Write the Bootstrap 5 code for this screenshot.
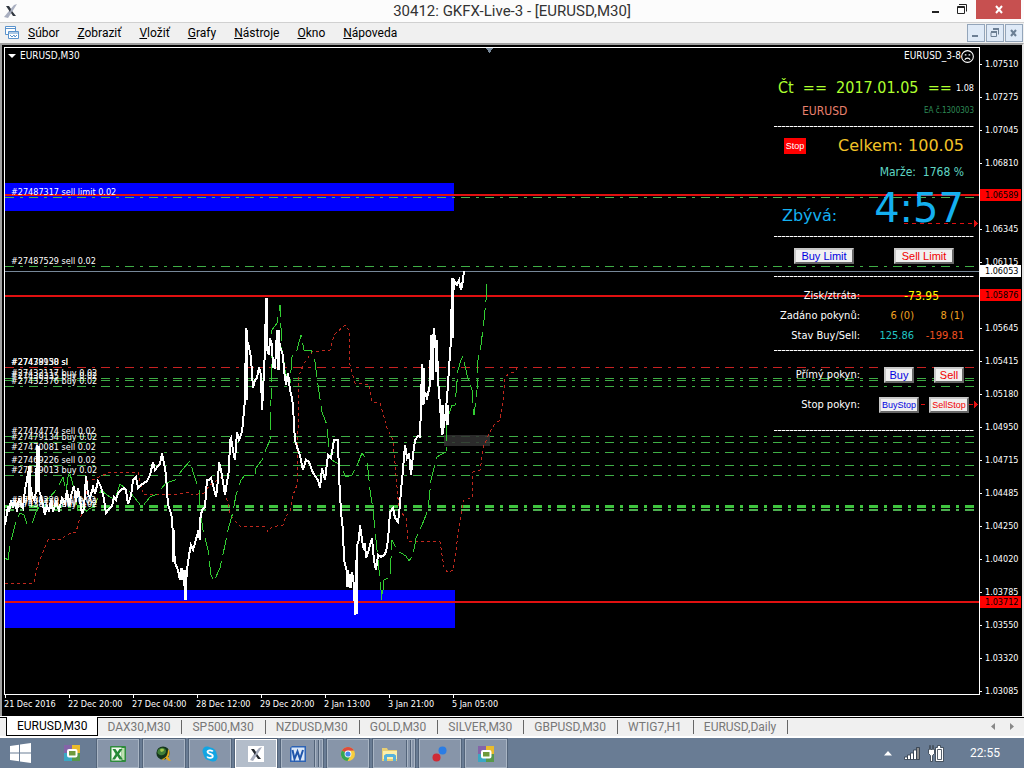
<!DOCTYPE html>
<html lang="sk">
<head>
<meta charset="utf-8">
<meta name="viewport" content="width=device-width, initial-scale=1">
<title>30412: GKFX-Live-3 - [EURUSD,M30]</title>
<link href="https://cdn.jsdelivr.net/npm/bootstrap@5.3.0/dist/css/bootstrap.min.css" rel="stylesheet">
<style>
  :root { --ui: Roboto, "Open Sans", "Noto Sans", sans-serif; --chart: "DejaVu Sans Condensed", "DejaVu Sans", sans-serif; }
  body { font-family: var(--ui); font-size: 12px; color: #000; background: #000; }
  button { font: inherit; }
  .title-bar { height: 23px; background: #fcfcfc; border-bottom: 1px solid #d0d0d0; }
  .title-bar h1 { font-size: 15px; line-height: 23px; color: #333; padding-left: 84px; }
  .win-btn { height: 19px; width: 27px; }
  .win-close { width: 45px; background: #c75050; margin-right: 3px; }
  .menu-bar { height: 20px; background: #f0f0f0; }
  .menu-bar ul { gap: 18px; }
  .menu-bar a { color: #000; line-height: 20px; }
  .child-set { gap: 1px; padding-right: 1px; }
  .child-btn { width: 18px; height: 18px; background: #dfeaf7; border: 1px solid #93a5ba; }
  .frame { background: #000; border-top: 2px solid #a0a0a0; border-left: 2px solid #a0a0a0; border-right: 2px solid #e8e8e8; padding: 2px 0 0 2px; font-family: var(--chart); font-size: 9px; color: #fff; }
  .plot { border: 1px solid #fff; }
  .order-text { font-size: 9px; fill: #fff; }
  .caption-text { font-size: 10px; line-height: 14px; padding: 1px 5px 0 3px; }
  .price-axis { width: 42px; padding-top: 1px; }
  .price-axis li { height: 33px; line-height: 33px; }
  .price-axis li::before { content: ""; display: inline-block; width: 2px; height: 1px; background: #fff; margin-right: 3px; vertical-align: middle; }
  .price-flag { left: 0; width: 41px; height: 12px; line-height: 12px; padding-left: 5px; background: #f00; color: #000; }
  .price-now { background: #fff; }
  .time-axis { height: 21px; }
  .time-axis li { width: 64px; line-height: 12px; }
  .time-axis li::before { content: ""; display: block; width: 1px; height: 3px; background: #fff; margin-left: 1px; }
  .panel { top: 27px; right: 5px; width: 200px; font-size: 12px; line-height: 22px; }
  .panel span { white-space: pre; }
  .rule { height: 10px; }
  .rule::before { content: ""; display: block; flex: 1; height: 1px; background: repeating-linear-gradient(90deg, #fff 0 3px, #777 3px 4px); }
  .h20 { height: 20px; } .h26 { height: 26px; } .h30 { height: 30px; } .h50 { height: 50px; }
  .pe-10 { padding-right: 10px; } .ps-10 { padding-left: 10px; }
  .big { font-size: 16px; }
  .wide { font-family: "DejaVu Sans", sans-serif; }
  .clock { font-size: 40px; line-height: 54px; }
  .tiny { font-size: 8px; }
  .spot { font-size: 9px; }
  .pair { font-size: 12px; padding-left: 28px; }
  .lime { color: #adff2f; } .salmon { color: #e9806e; } .sea { color: #2e8b57; } .gold { color: #f2c328; } .aqua { color: #5fd6c4; }
  .sky { color: #14b0f0; } .yellow { color: #ff0; } .orange { color: #f0a020; } .teal { color: #20c4c4; } .loss { color: #f05020; }
  .limit-row { padding: 0 20px; }
  .market-rows { padding: 5px 0; }
  .market-rows > div > div { padding-left: 14px; }
  .cap-col { width: 86px; text-align: right; font-size: 11px; }
  .profit-col { width: 79px; text-align: right; }
  .num-col { width: 54px; text-align: right; font-size: 11px; }
  .num-col2 { width: 50px; text-align: right; font-size: 11px; }
  .order-btn { width: 60px; height: 16px; border: 2px solid; border-color: #c8c8c8 #686868 #686868 #c8c8c8; background: #f0f0f0; font-family: "Liberation Sans", sans-serif; font-size: 11px; line-height: 12px; padding: 0; border-radius: 0; text-align: center; color: #0000e0; }
  .order-btn.sell { color: #f00000; }
  .order-btn.w30 { width: 30px; } .order-btn.w40 { width: 40px; font-size: 9px; }
  .stop-btn { width: 22px; height: 16px; background: #f00; color: #fff; border: 0; padding: 0; font-family: "Liberation Sans", sans-serif; font-size: 9px; line-height: 16px; }
  .tab-strip { height: 22px; background: #f0f0f0; border-bottom: 2px solid #fff; box-shadow: inset 0 1px #fff, inset 0 2px #000; padding: 1px 0 0 6px; }
  .tab-strip a { color: #777; line-height: 14px; padding: 0 11px 0 10px; border-right: 1px solid #666; }
  .tab-strip a.current { color: #000; background: #fff; border: 1px solid #000; border-top: 0; line-height: 18px; padding: 0 9px 0 10px; }
  .task-bar { height: 30px; background: #697c94; }
  .start-btn { margin: 0 33px 0 10px; }
  .pinned-btn { margin-right: 17px; }
  .task-set { gap: 4px; }
  .task { width: 42px; height: 29px; background: #8795a9; border: 1px solid #a9b5c4; outline: 1px solid #53647a; padding: 0; }
  .task.current { background: #b3bdca; border-color: #fff; }
  .strip { width: 4px; border-left: 1px solid #53647a; box-shadow: inset 1px 0 #a9b5c4; }
  .tray { padding-right: 24px; }
  .tray .signal { margin: 0 8px 0 12px; }
  .tray time { color: #fff; font-size: 12px; margin-left: 26px; }
</style>
</head>
<body>
<div class="d-flex flex-column vh-100 overflow-hidden">

  <header class="title-bar d-flex align-items-start flex-shrink-0">
    <svg class="ms-1 mt-1" width="14" height="14" viewBox="0 0 14 14" aria-hidden="true"><path d="M10 1 13 0 8 8 4 14 0 13 5 7z" fill="#a9afc0"/><path d="M2 2h3l2 3-1 3zM8 7l4 5H9L7 9z" fill="#30363f"/></svg>
    <h1 class="flex-fill text-center m-0 fw-normal text-nowrap">30412: GKFX-Live-3 - [EURUSD,M30]</h1>
    <button class="win-btn border-0 p-0 bg-transparent d-flex" aria-label="Minimalizovať"><svg width="27" height="19"><path d="M10 12h7" stroke="#222" stroke-width="2"/></svg></button>
    <button class="win-btn border-0 p-0 bg-transparent d-flex" aria-label="Obnoviť"><svg width="27" height="19"><path d="M8.500 6.500h7v7h-7zM8 7.500h8M10 4.500h7.500v7" fill="none" stroke="#222"/></svg></button>
    <button class="win-btn win-close border-0 p-0 d-flex justify-content-center" aria-label="Zavrieť"><svg width="12" height="19"><path d="M3 6l6 7M9 6l-6 7" stroke="#fff" stroke-width="2"/></svg></button>
  </header>

  <nav class="menu-bar d-flex align-items-center flex-shrink-0">
    <svg class="ms-1" width="16" height="16" viewBox="0 0 16 16" fill="none" stroke="#5b93cc" aria-hidden="true"><path d="M1.500 1.500h10v8h-10zM1 3.500h11" fill="#fff"/><path d="M4.500 6.500h10v7h-10zM4 8h11" fill="#fff"/><path d="M6 10l2 2 2-2 1 2 2-2"/></svg>
    <ul class="list-unstyled d-flex m-0 ms-2">
      <li><a class="text-decoration-none" href="#"><u>S</u>úbor</a></li>
      <li><a class="text-decoration-none" href="#"><u>Z</u>obraziť</a></li>
      <li><a class="text-decoration-none" href="#"><u>V</u>ložiť</a></li>
      <li><a class="text-decoration-none" href="#"><u>G</u>rafy</a></li>
      <li><a class="text-decoration-none" href="#"><u>N</u>ástroje</a></li>
      <li><a class="text-decoration-none" href="#"><u>O</u>kno</a></li>
      <li><a class="text-decoration-none" href="#"><u>N</u>ápoveda</a></li>
    </ul>
    <div class="child-set ms-auto d-flex">
      <button class="child-btn p-0 d-flex" aria-label="Minimalizovať graf"><svg width="16" height="16"><path d="M4 11h6" stroke="#6c7f94" stroke-width="2"/></svg></button>
      <button class="child-btn p-0 d-flex" aria-label="Obnoviť graf"><svg width="16" height="16" fill="none" stroke="#6c7f94"><path d="M4 7.500h5.500v4h-5.500zM6 4.500h5.500v5"/><path d="M4 7h6M6 4h6" stroke-width="2"/></svg></button>
      <button class="child-btn p-0 d-flex" aria-label="Zavrieť graf"><svg width="16" height="16"><path d="M5 5l5 6M10 5l-5 6" stroke="#6c7f94" stroke-width="2"/></svg></button>
    </div>
  </nav>

  <main class="frame d-flex flex-column flex-fill overflow-hidden">
    <div class="d-flex flex-fill overflow-hidden">
      <section class="plot position-relative flex-fill overflow-hidden">
        <svg class="position-absolute top-0 start-0 w-100 h-100" role="img" aria-label="EURUSD M30">
          <g transform="translate(-5 -48)" fill="none" shape-rendering="crispEdges">
            <path d="M485 47h9l-4.500 6z" fill="#778899"/>
            <path d="M5 183h449v28H5zM5 590h450v38H5z" fill="#00f"/>
            <g id="levels"></g>
            <path d="M444 435h46v11h-46z" fill="#333" fill-opacity=".85"/>
            <polyline stroke="#c0281e" stroke-dasharray="3 3" points="5,584 34,583 37,568 42,554 48,540 62,539 66,535 76,532 80,518 85,508 88,480 95,479 110,472 138,472 143,494 170,495 190,492 192,495 204,493 210,485 222,477 225,490 230,514 236,522 240,526 265,527 268,532 272,527 283,525 286,516 290,512 293,495 297,485 298,430 299,375 305,362 312,352 330,350 334,335 345,325 349,330 350,365 355,383 369,385 372,402 380,403 387,428 393,440 396,475 399,510 406,518 408,541 440,542 444,567 448,573 453,570 456,550 460,520 464,500 472,498 473,472 480,470 484,445 490,432 494,425 500,420 503,400 505,378 509,373 515,372 517,368"/>
            <polyline stroke="#32cd32" stroke-dasharray="18 6" points="5,558 8,560 10,545 15,525 20,513 24,515 27,524 32,524 36,512 40,505 50,497 57,489 63,477 66,492 69,470 73,485 78,510 85,512 95,505 101,490 107,495 115,500 120,484 130,492 142,507 150,497 157,494 166,483 175,480 182,470 190,461 194,475 199,490 200,510 203,530 208,550 211,575 214,581 220,568 225,545 228,530 233,512 236,495 241,480 245,475 255,476 256,468 262,460 266,449 270,440 271,400 272,330 277,323 280,305 282,350 287,380 290,383 292,357 297,350 301,335 304,350 311,350 315,362 318,385 322,412 327,425 329,450 332,460 340,465 346,477 352,475 358,463 362,453 367,460 370,490 373,510 376,540 378,560 381,590 382,600 384,580 390,577 392,540 397,550 401,553 406,556 409,561 413,555 416,538 422,525 428,510 431,480 437,457 440,455 446,452 447,420 452,405 455,405 458,370 461,360 463,356 467,375 472,390 474,415 477,390 478,360 481,345 484,320 486,300 487,283 489,283"/>
            <polyline stroke="#fff" stroke-width="2" points="5,525 7,513 8,506 9,512 11,500 13,508 15,500 17,512 19,498 21,505 23,508 25,490 27,480 28,472 29,470 30,484 32,495 34,500 36,492 37,445 38,470 39,490 41,497 43,505 45,515 47,505 49,512 51,500 53,512 56,502 59,510 62,498 65,504 67,490 69,506 71,496 74,486 76,502 78,488 80,500 82,514 84,508 86,476 88,494 90,498 93,487 95,494 98,481 101,487 104,499 106,513 109,509 112,506 114,497 116,500 118,493 121,490 124,488 126,490 128,504 131,496 133,480 136,477 138,488 141,485 144,483 147,481 150,475 153,462 155,470 158,466 160,464 162,453 164,463 166,475 167,490 168,505 170,510 172,518 173,538 174,548 175,563 178,570 180,580 182,570 184,572 185,600 187,570 189,555 191,545 193,550 195,543 198,532 200,540 200,520 202,510 205,507 207,480 209,480 211,478 213,485 216,497 218,480 219,462 221,470 223,482 225,495 227,482 229,470 230,440 231,438 233,450 235,460 237,432 239,440 242,432 245,400 246,328 247,340 249,347 251,358 253,388 255,380 257,378 259,367 261,375 262,410 263,392 265,350 266,298 267,350 269,355 270,338 272,345 273,367 275,368 276,350 277,330 279,340 281,350 283,355 284,370 286,385 288,373 290,390 292,398 293,405 294,425 295,440 297,447 300,455 303,470 306,460 309,462 313,473 318,480 320,488 322,468 325,480 328,455 331,458 334,440 338,440 339,475 341,512 343,530 344,560 347,572 348,587 350,580 352,572 354,585 355,615 356,580 357,545 359,540 360,525 362,540 364,550 365,543 366,558 368,553 370,545 372,538 374,560 376,570 378,555 381,557 384,555 386,552 388,540 390,512 393,508 395,518 398,522 400,505 401,490 403,470 405,445 407,458 409,453 411,475 413,455 415,440 418,436 420,437 421,405 422,364 423,405 425,392 427,398 430,385 431,335 433,340 434,328 436,355 437,340 438,380 440,405 442,435 444,425 446,410 448,385 449,368 451,340 452,278 453,293 455,282 457,285 459,280 461,290 463,280 464,271"/>
            <path d="M185 570v30M173 530v32M181 568v12M347 570v17M350 574v14M356 560v54M246 330v70M266 298v48M278 330v40M432 335v45M436 340v32M442 405v29M447 405v20M423 368v36M29 466v34M38 446v46M452 278v60" stroke="#fff" stroke-width="3"/>
            <path d="M904 223.500h70M921 404.500h53" stroke="#e01010" stroke-dasharray="4 4"/>
            <path d="M974 220l4 3.500-4 4zM974 401l4 3.500-4 4z" fill="#e01010"/>
          </g>
          <g id="orders" transform="translate(-5 -48)"></g>
        </svg>

        <div class="caption-text position-relative d-flex justify-content-between">
          <span class="d-flex align-items-center gap-1 lh-1"><svg width="8" height="5"><path d="M0 0h8L4 4z" fill="#fff"/></svg>EURUSD,M30</span>
          <span class="d-flex align-items-center">EURUSD_3-8<svg width="13" height="13" viewBox="0 0 12 12" fill="none" stroke="#fff"><circle cx="6" cy="6" r="5.400"/><path d="M3.500 9c1-2 4-2 5 0M3.500 4.500h1.500M7 4.500h1.500"/></svg></span>
        </div>

        <div class="panel position-absolute">
          <div class="h26 d-flex align-items-center justify-content-between ps-1"><span class="big lime">Čt  ==  2017.01.05  ==</span><span class="spot">1.08</span></div>
          <div class="h20 d-flex align-items-center justify-content-between"><span class="pair salmon">EURUSD</span><span class="tiny sea">EA č.1300303</span></div>
          <div class="rule d-flex align-items-center"></div>
          <div class="h30 d-flex align-items-center justify-content-between pe-10 ps-10"><button class="stop-btn">Stop</button><span class="big wide gold">Celkem: 100.05</span></div>
          <div class="h20 text-end pe-10 aqua"><span>Marže:  1768 %</span></div>
          <div class="h50 d-flex justify-content-between pe-10 ps-2 sky"><span class="big wide pt-4">Zbývá:</span><span class="clock wide">4:57</span></div>
          <div class="rule d-flex align-items-center"></div>
          <div class="limit-row h30 d-flex align-items-center justify-content-between"><button class="order-btn">Buy Limit</button><button class="order-btn sell">Sell Limit</button></div>
          <div class="rule d-flex align-items-center mb-1"></div>
          <div class="d-flex h20"><span class="cap-col">Zisk/ztráta:</span><span class="profit-col yellow">-73.95</span></div>
          <div class="d-flex h20"><span class="cap-col">Zadáno pokynů:</span><span class="num-col orange">6 (0)</span><span class="num-col2 orange">8 (1)</span></div>
          <div class="d-flex h20"><span class="cap-col">Stav Buy/Sell:</span><span class="num-col teal">125.86</span><span class="num-col2 loss">-199.81</span></div>
          <div class="rule d-flex align-items-center"></div>
          <div class="market-rows">
            <div class="d-flex h30 align-items-center"><span class="cap-col">Přímý pokyn:</span><div class="d-flex flex-fill justify-content-around"><button class="order-btn w30">Buy</button><button class="order-btn sell w30">Sell</button></div></div>
            <div class="d-flex h30 align-items-center"><span class="cap-col">Stop pokyn:</span><div class="d-flex flex-fill justify-content-around"><button class="order-btn w40">BuyStop</button><button class="order-btn sell w40">SellStop</button></div></div>
          </div>
          <div class="rule d-flex align-items-center"></div>
        </div>
      </section>

      <aside class="price-axis position-relative flex-shrink-0">
        <ul class="list-unstyled m-0" id="prices"></ul>
        <span class="price-flag position-absolute" style="top:142px">1.06589</span>
        <span class="price-flag position-absolute" style="top:242px">1.05876</span>
        <span class="price-flag price-now position-absolute" style="top:218px">1.06053</span>
        <span class="price-flag position-absolute" style="top:549px">1.03712</span>
      </aside>
    </div>
    <ol class="time-axis list-unstyled d-flex m-0 flex-shrink-0 text-nowrap">
      <li>21 Dec 2016</li><li>22 Dec 20:00</li><li>27 Dec 04:00</li><li>28 Dec 12:00</li><li>29 Dec 20:00</li><li>2 Jan 13:00</li><li>3 Jan 21:00</li><li>5 Jan 05:00</li>
    </ol>
  </main>

  <nav class="tab-strip d-flex align-items-center flex-shrink-0 text-nowrap">
    <a class="current text-decoration-none" href="#">EURUSD,M30</a>
    <a class="text-decoration-none" href="#">DAX30,M30</a>
    <a class="text-decoration-none" href="#">SP500,M30</a>
    <a class="text-decoration-none" href="#">NZDUSD,M30</a>
    <a class="text-decoration-none" href="#">GOLD,M30</a>
    <a class="text-decoration-none" href="#">SILVER,M30</a>
    <a class="text-decoration-none" href="#">GBPUSD,M30</a>
    <a class="text-decoration-none" href="#">WTIG7,H1</a>
    <a class="text-decoration-none" href="#">EURUSD,Daily</a>
    <svg class="ms-auto me-2" width="26" height="8" fill="#888"><path d="M5 0v7L1 3.500zM20 0v7l4-3.500z"/></svg>
  </nav>

  <footer class="task-bar d-flex align-items-center flex-shrink-0">
    <button class="start-btn border-0 bg-transparent p-0 d-flex" aria-label="Štart"><svg width="21" height="20" fill="#fff"><path d="M0 3l9-1.300V9.500H0zM10 1.500L21 0v9.500H10zM0 10.500h9v7.800L0 17zM10 10.500h11V20l-11-1.500z"/></svg></button>
    <button class="pinned-btn border-0 bg-transparent p-0 d-flex" aria-label="Správca"><svg width="16" height="16"><use href="#ico-squares"/></svg></button>
    <div class="task-set d-flex">
      <button class="task" aria-label="Excel"><svg width="16" height="16" viewBox="0 0 16 16"><rect width="16" height="16" rx="1" fill="#2e8b3c"/><path d="M1.500 1.500h10v13h-10z" fill="#f2f9ee"/><path d="M11.500 2v12h3V2z" fill="#bfe0b0"/><path d="M2.500 3h3l2 3 2-3h3L9 8l4 5.500H9.500L7.300 10 5 13.500H2L5.600 8z" fill="#278a38"/></svg></button>
      <button class="task" aria-label="Terminál"><svg width="16" height="16" viewBox="0 0 16 16"><circle cx="7" cy="7" r="6.600" fill="#14351b"/><path d="M2 4c3-4 8-2 8 1s-3 5-6 4S1 6 2 4z" fill="#3f7d37"/><path d="M4 4c1-2 4-1 4 0S6 6 5 6z" fill="#a3c74d"/><path d="M12 3c2 2 2 6 0 8l3 4-3-.5L9.500 12 7 14.500 6 13c4-1 6-4 6-10z" fill="#e3a81b"/></svg></button>
      <button class="task" aria-label="Skype"><svg width="16" height="16" viewBox="0 0 16 16"><circle cx="8" cy="8" r="6.500" fill="#12a5e3"/><circle cx="5" cy="5" r="4.500" fill="#12a5e3"/><circle cx="11" cy="11" r="4.500" fill="#12a5e3"/><path d="M10.800 5.500C10 3.800 5.500 3.800 5.500 6s5.300 1.500 5.300 4-4.800 2.500-5.600.5" fill="none" stroke="#fff" stroke-width="1.800"/></svg></button>
      <button class="task current" aria-label="MetaTrader"><svg width="16" height="16" viewBox="0 0 16 16"><path d="M0 0h16v16H0z" fill="#fff"/><path d="M11 2l3-1-5 8-4 6-3-1 4-6z" fill="#a9afc0"/><path d="M3 3h3l2 3-1 3zM9 8l4 5h-3L8 10z" fill="#23282f"/></svg></button>
      <button class="task d-flex" aria-label="Word"><span class="flex-fill align-self-center"><svg width="16" height="16" viewBox="0 0 16 16"><path d="M0 2l2-2h14v16H0z" fill="#2c62b4"/><path d="M1.500 1.500h13v13h-13z" fill="#dbe8f8"/><path d="M2.500 4l2 9 3-7.500 2.500 7.500L13 4" fill="none" stroke="#1f55ab" stroke-width="2"/></svg></span><span class="strip h-100"></span><span class="strip h-100"></span></button>
      <button class="task" aria-label="Chrome"><svg width="16" height="16" viewBox="0 0 16 16"><circle cx="8" cy="8" r="7" fill="#f7ce3e"/><path d="M8 8L1.900 4.500A7 7 0 0 1 14.100 4.500L8 4.800z" fill="#dd4b3e"/><path d="M1.900 4.500a7 7 0 0 0 5.600 10.500L10 10.500 8 8z" fill="#35a552"/><circle cx="8" cy="8" r="3.400" fill="#fff"/><circle cx="8" cy="8" r="2.600" fill="#4687ea"/></svg></button>
      <button class="task d-flex" aria-label="Prieskumník"><span class="flex-fill align-self-center"><svg width="16" height="16" viewBox="0 0 16 16"><path d="M0 2h5l1 2h9v11H0z" fill="#e8cf74"/><path d="M1 5h14v8H1z" fill="#fbefac"/><path d="M2 15V9.500L4 8h8l2 1.500V15h-3v-4H5v4z" fill="#56b2dc"/></svg></span><span class="strip h-100"></span><span class="strip h-100"></span></button>
      <button class="task" aria-label="Zdieľanie"><svg width="16" height="16" viewBox="0 0 16 16"><circle cx="10.500" cy="4.500" r="4" fill="#2b7de4"/><circle cx="4.500" cy="11.500" r="4" fill="#cf2b35"/></svg></button>
      <button class="task" aria-label="Správca okien"><svg width="16" height="16" viewBox="0 0 16 16"><g id="ico-squares"><path d="M0 0h8v8H0z" fill="#8464a8"/><path d="M8 0h8v8H8z" fill="#e9bb2c"/><path d="M0 8h8v8H0z" fill="#3aa7c4"/><path d="M8 8h8v8H8z" fill="#57984a"/><rect x="4" y="5" width="8.500" height="6.500" rx="1" fill="#6f9a3c" stroke="#fff" stroke-width="2"/></g></svg></button>
    </div>
    <div class="tray ms-auto d-flex align-items-center">
      <svg width="8" height="5"><path d="M0 4.500L4 0l4 4.500z" fill="#fff"/></svg>
      <svg class="signal" width="16" height="13" stroke="#2c3847" stroke-width=".8" fill="#fff"><path d="M.5 10h3v2.500h-3zM3.500 8h3v4.500h-3zM6.500 6h3v6.500h-3zM9.500 3h3v9.500h-3z"/><path d="M12.500.5h3v12h-3z" fill="#8b8b8b"/></svg>
      <svg width="16" height="17" fill="#fff" stroke="#2c3847" stroke-width=".8"><path d="M1.500.5h1v4h2v-4h1v4h1v4l-2 2v6h-2v-6l-2-2v-4h1z"/><path d="M9.500.5h3v2h3v14h-8v-14h2z"/><path d="M9.500 4.500h4v10h-4z"/></svg>
      <time>22:55</time>
    </div>
  </footer>
</div>

<script src="https://cdn.jsdelivr.net/npm/bootstrap@5.3.0/dist/js/bootstrap.bundle.min.js"></script>
<script>
  // Horizontal levels: y, colour, thickness, dash-dot or solid
  const levels = [
    [195, '#e01010', 2, 0], [197.5, '#4caf50', 1, 1], [266.5, '#3fae46', 1, 1], [271.5, '#778899', 1, 0],
    [296, '#e01010', 2, 0], [367.5, '#c82222', 1, 1], [378.5, '#3fae46', 1, 1], [380.5, '#3fae46', 1, 1],
    [386.5, '#3fae46', 1, 1], [436.5, '#3fae46', 1, 1], [442.5, '#3fae46', 1, 1], [452.5, '#3fae46', 1, 1],
    [465.5, '#3fae46', 1, 1], [475.5, '#3fae46', 1, 1], [506.5, '#3fc43f', 3, 1], [510, '#4caf50', 2, 1],
    [602, '#e01010', 2, 0]
  ];
  document.getElementById('levels').innerHTML = levels.map(([y, c, w, dash]) =>
    `<line x1="5" x2="102%" y1="${y}" y2="${y}" stroke="${c}" stroke-width="${w}"${dash ? ' stroke-dasharray="9 6 3 6"' : ''}/>`).join('');

  // Open orders: baseline y and caption
  const orders = [
    [195, '#27487317 sell limit 0.02'], [264, '#27487529 sell 0.02'], [365, '#27438930 sl'], [365, '#27479158 sl'],
    [376, '#27432117 buy 0.02'], [379, '#27438335 buy 0.02'], [384, '#27432376 buy 0.02'], [434, '#27474774 sell 0.02'],
    [440, '#27479134 buy 0.02'], [450, '#27470081 sell 0.02'], [463, '#27469226 sell 0.02'], [473, '#27439013 buy 0.02'],
    [503, '#27438230 sell 0.02'], [505, '#27479158 buy 0.02'], [507, '#27438736 buy 0.02']
  ];
  document.getElementById('orders').innerHTML = orders.map(([y, t]) =>
    `<text class="order-text" x="11" y="${y}">${t}</text>`).join('');

  // Blank entries are ticks whose caption is covered by a price flag
  const prices = ['1.07510', '1.07275', '1.07045', '1.06810', '', '1.06345', '1.06115', '', '1.05645', '1.05415', '1.05180',
    '1.04950', '1.04715', '1.04485', '1.04250', '1.04020', '1.03785', '1.03550', '1.03320', '1.03085'];
  document.getElementById('prices').innerHTML = prices.map(p => `<li>${p}</li>`).join('');
</script>
</body>
</html>
